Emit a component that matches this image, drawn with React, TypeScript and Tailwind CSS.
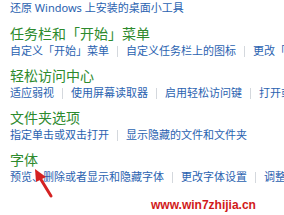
import { Fragment } from 'react';

const sections = [
  { title: '任务栏和「开始」菜单', links: ['自定义「开始」菜单', '自定义任务栏上的图标', '更改「开始」菜单上的图片'] },
  { title: '轻松访问中心', links: ['适应弱视', '使用屏幕读取器', '启用轻松访问键', '打开或关闭高对比度'] },
  { title: '文件夹选项', links: ['指定单击或双击打开', '显示隐藏的文件和文件夹'] },
  { title: '字体', links: ['预览、删除或者显示和隐藏字体', '更改字体设置', '调整 ClearType 文本'] },
];

function Section({ title, links }: { title: string; links: string[] }) {
  return (
    <div className="mb-[8px]">
      <div className="h-[18px] leading-[18px] text-[14px] text-[#2d8a2d]">{title}</div>
      <div className="h-[16px] flex items-center whitespace-nowrap text-[11px] text-[#2a62b0]">
        {links.map((l, i) => (
          <Fragment key={l}>
            {i > 0 && <span className="mx-[8px] h-[11px] w-px bg-[#d4d8dd] shrink-0" />}
            <span className="shrink-0">{l}</span>
          </Fragment>
        ))}
      </div>
    </div>
  );
}

export default function App() {
  return (
    <div className="relative w-[284px] h-[215px] overflow-hidden bg-white pl-[10px]" style={{ fontFamily: '"Noto Sans", "Noto Sans CJK SC", sans-serif' }}>
      <div className="h-[16px] leading-[16px] text-[11px] text-[#2a62b0] whitespace-nowrap mb-[9px]">还原 Windows 上安装的桌面小工具</div>
      {sections.map(s => (
        <Section key={s.title} title={s.title} links={s.links} />
      ))}

      {/* red arrow pointing at 字体 */}
      <svg className="absolute left-0 top-0" width="284" height="215" viewBox="0 0 284 215">
        <line x1="51" y1="196" x2="40" y2="178" stroke="#d42222" strokeWidth="3" strokeLinecap="round" />
        <polygon points="35,169 46,177 36,182" fill="#d42222" />
      </svg>

      <div className="absolute left-[151px] top-[197px] text-[12px] font-bold text-[#d11a1a] leading-[16px]" style={{ fontFamily: '"Liberation Sans", Arial, sans-serif' }}>
        www.win7zhijia.cn
      </div>
    </div>
  );
}
